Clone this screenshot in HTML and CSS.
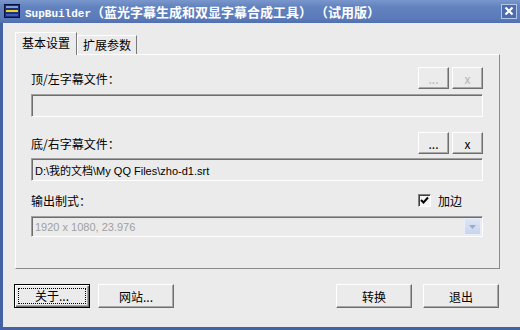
FILE: index.html
```html
<!DOCTYPE html>
<html lang="zh-CN">
<head>
    <meta charset="UTF-8">
    <title>SupBuilder</title>
    <link rel="stylesheet" href="styles.css">
</head>
<body>
    <div class="window">
        <div class="titlebar">
            <svg class="app-icon" width="16" height="14" viewBox="0 0 16 14">
                <rect x="0.5" y="0.5" width="15" height="13" fill="#1c2f78" stroke="#0b1440"/>
                <rect x="2" y="2" width="12" height="2" fill="#7fa0e0"/>
                <rect x="2" y="6" width="12" height="2" fill="#f0d020"/>
                <rect x="2" y="10" width="12" height="2" fill="#3a5cb8"/>
            </svg>
            <span class="title"><span class="latin">SupBuilder</span>（蓝光字幕生成和双显字幕合成工具） （试用版）</span>
            <div class="close">
                <svg width="10" height="10" viewBox="0 0 10 10">
                    <path d="M1.5 1.5 L8.5 8.5 M8.5 1.5 L1.5 8.5" stroke="#fff" stroke-width="2.2"/>
                </svg>
            </div>
        </div>

        <div class="client">
            <div class="tabs">
                <div class="tab active">基本设置</div>
                <div class="tab">扩展参数</div>
            </div>

            <div class="panel">
                <div class="row">
                    <span>顶/左字幕文件：</span>
                    <div class="side">
                        <button class="btn small" disabled>...</button>
                        <button class="btn small" disabled>x</button>
                    </div>
                </div>
                <div class="field"></div>

                <div class="row second">
                    <span>底/右字幕文件：</span>
                    <div class="side">
                        <button class="btn small">...</button>
                        <button class="btn small">x</button>
                    </div>
                </div>
                <div class="field">D:\我的文档\My QQ Files\zho-d1.srt</div>

                <div class="row third">
                    <span>输出制式：</span>
                    <div class="side">
                        <label class="check"><span class="box">
                            <svg width="9" height="9" viewBox="0 0 9 9">
                                <path d="M1 4 L3.5 6.5 L8 1.5" fill="none" stroke="#000" stroke-width="2"/>
                            </svg>
                        </span>加边</label>
                    </div>
                </div>
                <div class="field select disabled">
                    <span>1920 x 1080, 23.976</span>
                    <span class="drop">
                        <svg width="7" height="4" viewBox="0 0 7 4"><path d="M0 0 H7 L3.5 4 Z" fill="#9aaad0"/></svg>
                    </span>
                </div>
            </div>

            <div class="footer">
                <div class="group">
                    <button class="btn wide default"><span class="focus">关于...</span></button>
                    <button class="btn wide">网站...</button>
                </div>
                <div class="group right">
                    <button class="btn wide">转换</button>
                    <button class="btn wide">退出</button>
                </div>
            </div>
        </div>
    </div>
</body>
</html>
```

FILE: styles.css
```css
*, *::before, *::after {
    box-sizing: border-box;
}

body {
    margin: 0;
    background: #ebebeb;
    font: 12px "Noto Sans CJK SC", "Liberation Sans", sans-serif;
    color: #000;
}

div.window {
    width: 520px;
    height: 330px;
    display: flex;
    flex-direction: column;
    background: #ebebeb;
    border-left: 3px solid #4363a4;
    border-bottom: 3px solid #4363a4;
}

div.titlebar {
    display: flex;
    align-items: center;
    height: 23px;
    margin-left: -3px;
    padding: 0 4px 1px 4px;
    background: linear-gradient(#7a97cc, #6282bf 30%, #5a7aba 80%, #5070b0);
}

.app-icon {
    flex: none;
    margin-right: 5px;
}

span.title {
    flex: 1;
    color: #fff;
    font: bold 13px "Noto Sans CJK SC", sans-serif;
    white-space: nowrap;
    overflow: hidden;
}

span.latin {
    font: bold 11px "Liberation Mono", monospace;
}

div.close {
    display: flex;
    align-items: center;
    justify-content: center;
    width: 16px;
    height: 15px;
    margin-right: -1px;
    background: #4d6cae;
    border: 1px solid #b4c6e6;
}

div.client {
    flex: 1;
    display: flex;
    flex-direction: column;
    padding: 9px 0 0 12px;
}

div.tabs {
    display: flex;
    align-items: flex-end;
    height: 22px;
}

div.tab {
    height: 19px;
    padding: 0 5px;
    line-height: 18px;
    border-top: 1px solid #fff;
    border-left: 1px solid #fff;
    border-right: 1px solid #7a7a7a;
}

div.tab.active {
    position: relative;
    z-index: 1;
    height: 23px;
    margin-bottom: -1px;
    padding: 0 6px;
    line-height: 19px;
    background: #ebebeb;
}

div.panel {
    width: 485px;
    height: 215px;
    padding: 12px 16px 0 15px;
    border-top: 1px solid #fff;
    border-left: 1px solid #fff;
    border-right: 1px solid #8a8a8a;
    border-bottom: 1px solid #8a8a8a;
}

div.row {
    display: flex;
    justify-content: space-between;
    align-items: center;
    height: 22px;
    margin-bottom: 5px;
}

div.row.second {
    margin-top: 15px;
    margin-bottom: 4px;
}

div.row.third {
    margin-top: 8px;
    margin-bottom: 5px;
}

div.side {
    display: flex;
    gap: 3px;
    width: 65px;
}

div.field {
    display: flex;
    align-items: center;
    height: 23px;
    padding: 0 3px;
    font: 11px "Liberation Sans", "Noto Sans CJK SC", sans-serif;
    border-top: 1px solid #a0a0a0;
    border-left: 1px solid #a0a0a0;
    border-right: 1px solid #fff;
    border-bottom: 1px solid #fff;
    box-shadow: inset 1px 1px 0 #6e6e6e;
}

div.field.select {
    height: 21px;
    justify-content: space-between;
    padding-right: 1px;
}

div.field.disabled {
    color: #a0a0a0;
}

span.drop {
    display: flex;
    align-items: center;
    justify-content: center;
    width: 17px;
    height: 17px;
    background: linear-gradient(#dfe6f4, #c9d4ea);
    border: 1px solid #e8edf8;
}

label.check {
    display: flex;
    align-items: center;
    gap: 7px;
}

span.box {
    display: flex;
    align-items: center;
    justify-content: center;
    width: 13px;
    height: 13px;
    background: #f4f4f4;
    border-top: 1px solid #808080;
    border-left: 1px solid #808080;
    border-right: 1px solid #fff;
    border-bottom: 1px solid #fff;
    box-shadow: inset 1px 1px 0 #404040;
}

button.btn {
    height: 22px;
    padding: 0;
    font: 12px "Noto Sans CJK SC", "Liberation Sans", sans-serif;
    color: #000;
    background: #ebebeb;
    border-top: 1px solid #fff;
    border-left: 1px solid #fff;
    border-right: 1px solid #6e6e6e;
    border-bottom: 1px solid #6e6e6e;
    box-shadow: inset -1px -1px 0 #a8a8a8;
}

button.btn:disabled {
    color: #b4b4b4;
}

button.small {
    width: 31px;
}

button.wide {
    width: 76px;
    height: 24px;
}

button.default {
    border: 1px solid #000;
    box-shadow: inset 1px 1px 0 #fff, inset -1px -1px 0 #6e6e6e, inset -2px -2px 0 #a8a8a8;
    padding: 3px;
}

span.focus {
    display: block;
    height: 100%;
    line-height: 14px;
    border: 1px dotted #000;
}

div.footer {
    display: flex;
    justify-content: space-between;
    width: 485px;
    margin-top: 15px;
    margin-left: -1px;
}

div.group {
    display: flex;
    gap: 8px;
}

div.group.right {
    gap: 11px;
}
```
